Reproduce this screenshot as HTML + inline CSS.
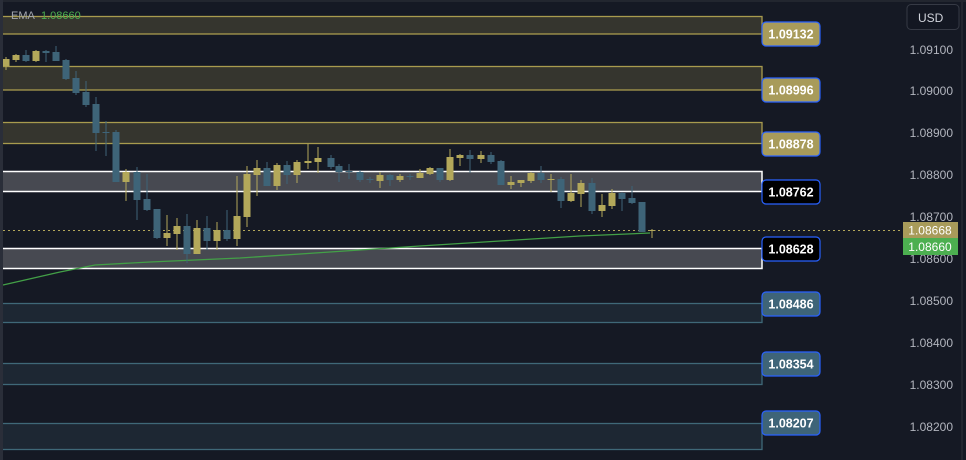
<!DOCTYPE html>
<html><head><meta charset="utf-8"><style>
html,body{margin:0;padding:0;background:#151924;width:966px;height:460px;overflow:hidden;font-family:"Liberation Sans",sans-serif}
</style></head><body>
<svg width="966" height="460" xmlns="http://www.w3.org/2000/svg" style="display:block">
<rect width="966" height="460" fill="#151924"/>
<rect x="0" y="0" width="966" height="2" fill="#22262f"/>
<rect x="961" y="0" width="2" height="460" fill="#22262f"/>
<g fill="#35352e" stroke="#a89b4e" stroke-width="1.3">
<rect x="-5" y="16.5" width="767" height="17.5"/>
<rect x="-5" y="66.5" width="767" height="23.5"/>
<rect x="-5" y="122.5" width="767" height="21"/>
</g>
<g fill="#474951" stroke="#ffffff" stroke-width="1.5">
<rect x="-5" y="171.5" width="767" height="20"/>
<rect x="-5" y="248.5" width="767" height="20"/>
</g>
<g fill="#1d2733" stroke="#3f6878" stroke-width="1.3">
<rect x="-5" y="303.5" width="767" height="19"/>
<rect x="-5" y="363.5" width="767" height="21"/>
<rect x="-5" y="423.5" width="767" height="26"/>
</g>
<line x1="3" y1="230.5" x2="903" y2="230.5" stroke="#b3a85a" stroke-width="1" stroke-dasharray="2,3"/>
<polyline points="3,285 60,272 95,265 150,262 240,258 330,252 420,246 500,241 580,236 650,233" fill="none" stroke="#43a047" stroke-width="1.3"/>
<g fill="#b3a85a">
<rect x="5.5" y="57" width="1" height="13"/><rect x="2.5" y="59" width="7" height="7"/>
<rect x="15.5" y="54" width="1" height="8"/><rect x="12.5" y="55" width="7" height="5"/>
<rect x="35.5" y="50" width="1" height="12"/><rect x="32.5" y="51" width="7" height="10"/>
<rect x="125.5" y="169" width="1" height="32"/><rect x="122.5" y="172" width="7" height="10"/>
<rect x="166.5" y="215" width="1" height="31"/><rect x="163.5" y="233" width="7" height="5"/>
<rect x="176.5" y="218" width="1" height="32"/><rect x="173.5" y="226" width="7" height="8"/>
<rect x="196.5" y="220" width="1" height="34"/><rect x="193.5" y="228" width="7" height="26"/>
<rect x="216.5" y="222" width="1" height="28"/><rect x="213.5" y="230" width="7" height="11"/>
<rect x="236.5" y="176" width="1" height="70"/><rect x="233.5" y="216" width="7" height="23"/>
<rect x="246.5" y="166" width="1" height="61"/><rect x="243.5" y="174" width="7" height="43"/>
<rect x="256.5" y="160" width="1" height="36"/><rect x="253.5" y="168" width="7" height="7"/>
<rect x="276.5" y="163" width="1" height="27"/><rect x="273.5" y="165" width="7" height="21"/>
<rect x="296.5" y="160" width="1" height="23"/><rect x="293.5" y="162" width="7" height="13"/>
<rect x="307.5" y="144" width="1" height="25"/><rect x="304.5" y="161" width="7" height="2"/>
<rect x="317.5" y="147" width="1" height="26"/><rect x="314.5" y="158" width="7" height="4"/>
<rect x="379.5" y="172" width="1" height="16"/><rect x="376.5" y="175" width="7" height="6"/>
<rect x="399.5" y="174" width="1" height="8"/><rect x="396.5" y="176" width="7" height="4"/>
<rect x="419.5" y="169" width="1" height="9"/><rect x="416.5" y="173" width="7" height="5"/>
<rect x="429.5" y="167" width="1" height="8"/><rect x="426.5" y="168" width="7" height="6"/>
<rect x="449.5" y="149" width="1" height="32"/><rect x="446.5" y="157" width="7" height="23"/>
<rect x="459.5" y="154" width="1" height="12"/><rect x="456.5" y="155" width="7" height="3"/>
<rect x="480.5" y="151" width="1" height="12"/><rect x="477.5" y="155" width="7" height="4"/>
<rect x="510.5" y="176" width="1" height="13"/><rect x="507.5" y="182" width="7" height="3"/>
<rect x="520.5" y="180" width="1" height="7"/><rect x="517.5" y="180" width="7" height="3"/>
<rect x="530.5" y="172" width="1" height="11"/><rect x="527.5" y="173" width="7" height="8"/>
<rect x="550.5" y="174" width="1" height="18"/><rect x="547.5" y="179" width="7" height="1"/>
<rect x="570.5" y="174" width="1" height="28"/><rect x="567.5" y="193" width="7" height="8"/>
<rect x="580.5" y="180" width="1" height="27"/><rect x="577.5" y="183" width="7" height="11"/>
<rect x="601.5" y="194" width="1" height="23"/><rect x="598.5" y="205" width="7" height="6"/>
<rect x="611.5" y="189" width="1" height="20"/><rect x="608.5" y="193" width="7" height="13"/>
<rect x="651.5" y="229" width="1" height="9"/><rect x="648.5" y="230" width="7" height="1"/>
</g>
<g fill="#3e6478">
<rect x="25.5" y="50" width="1" height="12"/><rect x="22.5" y="55" width="7" height="6"/>
<rect x="45.5" y="50" width="1" height="12"/><rect x="42.5" y="51" width="7" height="2"/>
<rect x="55.5" y="46" width="1" height="15"/><rect x="52.5" y="52" width="7" height="9"/>
<rect x="65.5" y="59" width="1" height="21"/><rect x="62.5" y="60" width="7" height="19"/>
<rect x="75.5" y="71" width="1" height="24"/><rect x="72.5" y="78" width="7" height="15"/>
<rect x="85.5" y="81" width="1" height="26"/><rect x="82.5" y="92" width="7" height="13"/>
<rect x="95.5" y="97" width="1" height="54"/><rect x="92.5" y="104" width="7" height="29"/>
<rect x="105.5" y="121" width="1" height="35"/><rect x="102.5" y="132" width="7" height="1"/>
<rect x="115.5" y="130" width="1" height="52"/><rect x="112.5" y="132" width="7" height="50"/>
<rect x="136.5" y="167" width="1" height="53"/><rect x="133.5" y="172" width="7" height="28"/>
<rect x="146.5" y="174" width="1" height="37"/><rect x="143.5" y="199" width="7" height="11"/>
<rect x="156.5" y="209" width="1" height="30"/><rect x="153.5" y="209" width="7" height="29"/>
<rect x="186.5" y="214" width="1" height="49"/><rect x="183.5" y="226" width="7" height="28"/>
<rect x="206.5" y="216" width="1" height="34"/><rect x="203.5" y="228" width="7" height="13"/>
<rect x="226.5" y="210" width="1" height="31"/><rect x="223.5" y="230" width="7" height="9"/>
<rect x="266.5" y="162" width="1" height="24"/><rect x="263.5" y="168" width="7" height="18"/>
<rect x="286.5" y="161" width="1" height="23"/><rect x="283.5" y="165" width="7" height="10"/>
<rect x="330.5" y="155" width="1" height="14"/><rect x="327.5" y="158" width="7" height="9"/>
<rect x="338.5" y="164" width="1" height="18"/><rect x="335.5" y="166" width="7" height="6"/>
<rect x="348.5" y="164" width="1" height="15"/><rect x="345.5" y="171" width="7" height="1"/>
<rect x="359.5" y="170" width="1" height="12"/><rect x="356.5" y="172" width="7" height="8"/>
<rect x="369.5" y="177" width="1" height="6"/><rect x="366.5" y="179" width="7" height="1"/>
<rect x="389.5" y="174" width="1" height="12"/><rect x="386.5" y="175" width="7" height="5"/>
<rect x="409.5" y="174" width="1" height="6"/><rect x="406.5" y="176" width="7" height="1"/>
<rect x="439.5" y="168" width="1" height="14"/><rect x="436.5" y="168" width="7" height="12"/>
<rect x="469.5" y="150" width="1" height="23"/><rect x="466.5" y="155" width="7" height="4"/>
<rect x="490.5" y="152" width="1" height="12"/><rect x="487.5" y="155" width="7" height="7"/>
<rect x="500.5" y="160" width="1" height="25"/><rect x="497.5" y="161" width="7" height="24"/>
<rect x="540.5" y="166" width="1" height="17"/><rect x="537.5" y="173" width="7" height="7"/>
<rect x="560.5" y="177" width="1" height="31"/><rect x="557.5" y="179" width="7" height="22"/>
<rect x="591.5" y="178" width="1" height="36"/><rect x="588.5" y="183" width="7" height="28"/>
<rect x="621.5" y="192" width="1" height="19"/><rect x="618.5" y="193" width="7" height="6"/>
<rect x="631.5" y="186" width="1" height="18"/><rect x="628.5" y="198" width="7" height="5"/>
<rect x="641.5" y="202" width="1" height="30"/><rect x="638.5" y="202" width="7" height="30"/>
</g>
<rect x="0" y="0" width="3" height="460" fill="#2a2e39"/>
<text x="11" y="19" font-size="11" fill="#a3a6af">EMA</text>
<text x="41" y="19" font-size="11" fill="#4caf50">1.08660</text>
<g font-size="12.5" font-weight="bold" text-anchor="middle">
<rect x="762" y="22" width="58" height="24" rx="4" fill="#a89b5a" stroke="#2962ff" stroke-width="1.2"/><text x="791" y="38.5" fill="#fff">1.09132</text>
<rect x="762" y="78" width="58" height="24" rx="4" fill="#a89b5a" stroke="#2962ff" stroke-width="1.2"/><text x="791" y="94.5" fill="#fff">1.08996</text>
<rect x="762" y="132" width="58" height="24" rx="4" fill="#a89b5a" stroke="#2962ff" stroke-width="1.2"/><text x="791" y="148.5" fill="#fff">1.08878</text>
<rect x="762" y="180" width="58" height="24" rx="4" fill="#000" stroke="#2962ff" stroke-width="1.2"/><text x="791" y="196.5" fill="#fff">1.08762</text>
<rect x="762" y="237" width="58" height="24" rx="4" fill="#000" stroke="#2962ff" stroke-width="1.2"/><text x="791" y="253.5" fill="#fff">1.08628</text>
<rect x="762" y="292" width="58" height="24" rx="4" fill="#3e6478" stroke="#2962ff" stroke-width="1.2"/><text x="791" y="308.5" fill="#fff">1.08486</text>
<rect x="762" y="352" width="58" height="24" rx="4" fill="#3e6478" stroke="#2962ff" stroke-width="1.2"/><text x="791" y="368.5" fill="#fff">1.08354</text>
<rect x="762" y="411" width="58" height="24" rx="4" fill="#3e6478" stroke="#2962ff" stroke-width="1.2"/><text x="791" y="427.5" fill="#fff">1.08207</text>
</g>
<rect x="907" y="4.5" width="52" height="25" rx="4" fill="#131722" stroke="#363a45" stroke-width="1"/>
<text x="918" y="22" font-size="12" fill="#d1d4dc">USD</text>
<g font-size="12" fill="#b2b5be" text-anchor="end">
<text x="953" y="54">1.09100</text>
<text x="953" y="95">1.09000</text>
<text x="953" y="137">1.08900</text>
<text x="953" y="179">1.08800</text>
<text x="953" y="221">1.08700</text>
<text x="953" y="263">1.08600</text>
<text x="953" y="305">1.08500</text>
<text x="953" y="347">1.08400</text>
<text x="953" y="389">1.08300</text>
<text x="953" y="431">1.08200</text>
</g>
<rect x="903" y="222" width="55" height="16" fill="#a89b5a"/>
<text x="930" y="234.5" font-size="12" fill="#fff" text-anchor="middle">1.08668</text>
<rect x="903" y="238" width="55" height="17" fill="#4caf50"/>
<text x="930" y="251" font-size="12" fill="#fff" text-anchor="middle">1.08660</text>
</svg>
</body></html>
